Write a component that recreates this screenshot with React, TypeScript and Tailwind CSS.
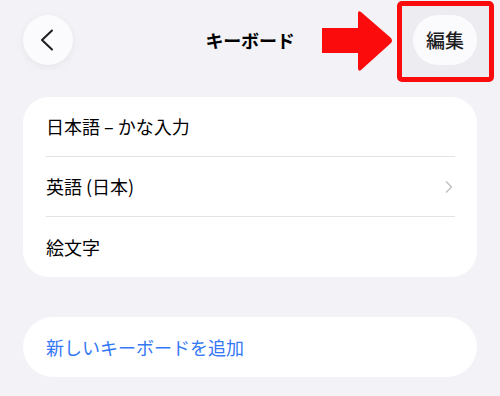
import { ChevronRight } from 'lucide-react'

// 設定 > キーボード 画面（編集ボタンに注釈付き）

const keyboards = ['日本語 – かな入力', '英語 (日本)', '絵文字']

export default function App() {
  return (
    <div
      className="h-[396px] w-[500px] overflow-hidden bg-[#f2f2f7] text-black"
      style={{ fontFamily: '"Noto Sans CJK JP", "Noto Sans", sans-serif' }}
    >
      {/* Header */}
      <header className="relative grid grid-cols-[1fr_auto_1fr] items-center px-[23px] pt-[15px]">
        <div className="flex">
          <button className="flex h-[50px] w-[50px] items-center justify-center rounded-full bg-[#fbfbfd] shadow-[0_2px_8px_rgba(0,0,0,0.06)]">
            <svg width="14" height="22" viewBox="0 0 14 22" className="-ml-[3px]">
              <path d="M12 1.5 L2 11 L12 20.5" fill="none" stroke="#1c1c1e" strokeWidth="2" strokeLinecap="round" strokeLinejoin="round" />
            </svg>
          </button>
        </div>

        <h1 className="text-[18px] font-bold tracking-[-0.2px]">キーボード</h1>

        <div className="flex justify-end">
          <div className="relative">
            {/* 注釈の赤枠 */}
            <div className="absolute -top-[14px] -bottom-[17px] -left-[16px] -right-[17px] rounded-[5px] border-[5px] border-[#fb0b0b] bg-[#ececf1]"></div>
            <button className="relative flex h-[50px] w-[64px] items-center justify-center rounded-full bg-[#fbfbfd] text-[19px] font-medium text-[#1c1c1e]">
              編集
            </button>
          </div>
        </div>

        {/* 注釈の矢印 */}
        <svg
          className="absolute left-[321px] top-[10px]"
          width="72"
          height="62"
          viewBox="0 0 72 62"
        >
          <path
            d="M1 18 H37 V3 Q37 0 40 2 L70 28 Q72 31 70 33 L40 60 Q37 62 37 58 V43 H1 Z"
            fill="#fb0b0b"
          />
        </svg>
      </header>

      {/* キーボード一覧 */}
      <section className="mx-[23px] mt-[32px] rounded-[26px] bg-white">
        {keyboards.map((name, i) => (
          <div key={name} className="pl-[23px] pr-[22px]">
            <div
              className={
                'flex h-[60px] items-center justify-between ' +
                (i < keyboards.length - 1 ? 'border-b border-[#e3e3e7]' : '')
              }
            >
              <span className="text-[18px]">{name}</span>
              {i === 1 && <ChevronRight size={20} strokeWidth={2} className="-mr-[4px] text-[#c4c4c8]" />}
            </div>
          </div>
        ))}
      </section>

      {/* 追加 */}
      <section className="mx-[23px] mt-[40px] flex h-[60px] items-center rounded-full bg-white pl-[23px]">
        <span className="text-[18px] text-[#3478f6]">新しいキーボードを追加</span>
      </section>
    </div>
  )
}
